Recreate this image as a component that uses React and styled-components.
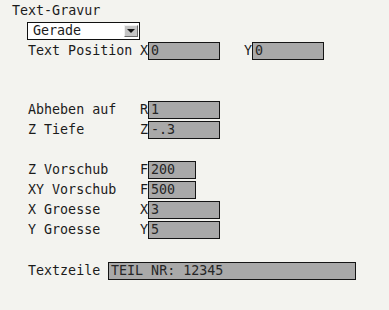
import React from 'react';
import styled, { createGlobalStyle } from 'styled-components';

const Global = createGlobalStyle`
  html, body {
    margin: 0;
    padding: 0;
    background: #f3f3ef;
  }
  body {
    font-family: "DejaVu Sans Mono", "Liberation Mono", monospace;
    font-size: 13.33px;
    color: #1b1b1b;
  }
`;

const Panel = styled.div`
  width: 389px;
  height: 310px;
  padding-top: 2px;
  box-sizing: border-box;
`;

const Title = styled.div`
  margin-left: 12px;
  height: 18px;
  line-height: 18px;
`;

const Combo = styled.div`
  margin: 2px 0 0 27px;
  width: 113px;
  height: 18px;
  box-sizing: border-box;
  border: 1px solid #111;
  background: #fff;
  display: flex;
  align-items: center;
  justify-content: space-between;
  padding-left: 5px;
  line-height: 16px;
`;

const ComboButton = styled.span`
  width: 14px;
  height: 12px;
  margin-right: 1px;
  box-sizing: border-box;
  background: #c4c4c4;
  border-top: 1px solid #f0f0f0;
  border-left: 1px solid #f0f0f0;
  border-right: 1px solid #6a6a6a;
  border-bottom: 1px solid #6a6a6a;
  display: flex;
  align-items: center;
  justify-content: center;

  &::after {
    content: '';
    width: 0;
    height: 0;
    border-left: 4px solid transparent;
    border-right: 4px solid transparent;
    border-top: 4px solid #111;
  }
`;

const Row = styled.div`
  display: flex;
  align-items: center;
  height: 18px;
  margin: ${(p) => p.$top || 2}px 0 0 28px;
  line-height: 18px;
`;

const Label = styled.span`
  width: ${(p) => p.$w || 112}px;
  white-space: pre;
`;

const Axis = styled.span`
  width: 8px;
`;

const Spacer = styled.span`
  width: ${(p) => p.$w}px;
`;

const Field = styled.div`
  width: ${(p) => p.$w || 72}px;
  height: 18px;
  box-sizing: border-box;
  border: 1px solid #151515;
  background: #a9a9a9;
  padding-left: 2px;
  line-height: 16px;
  color: #262626;
  white-space: pre;
`;

const fields = [
  { label: 'Abheben auf', axis: 'R', value: '1', top: 41 },
  { label: 'Z Tiefe', axis: 'Z', value: '-.3' },
  { label: 'Z Vorschub', axis: 'F', value: '200', w: 48, top: 22 },
  { label: 'XY Vorschub', axis: 'F', value: '500', w: 48 },
  { label: 'X Groesse', axis: 'X', value: '3' },
  { label: 'Y Groesse', axis: 'Y', value: '5' },
];

export default function App() {
  return (
    <Panel>
      <Global />
      <Title>Text-Gravur</Title>
      <Combo>
        Gerade
        <ComboButton />
      </Combo>
      <Row>
        <Label>Text Position</Label>
        <Axis>X</Axis>
        <Field>0</Field>
        <Spacer $w={24} />
        <Axis>Y</Axis>
        <Field>0</Field>
      </Row>
      {fields.map((f) => (
        <Row key={f.label} $top={f.top}>
          <Label>{f.label}</Label>
          <Axis>{f.axis}</Axis>
          <Field $w={f.w}>{f.value}</Field>
        </Row>
      ))}
      <Row $top={23}>
        <Label $w={80}>Textzeile</Label>
        <Field $w={248}>TEIL NR: 12345</Field>
      </Row>
    </Panel>
  );
}
